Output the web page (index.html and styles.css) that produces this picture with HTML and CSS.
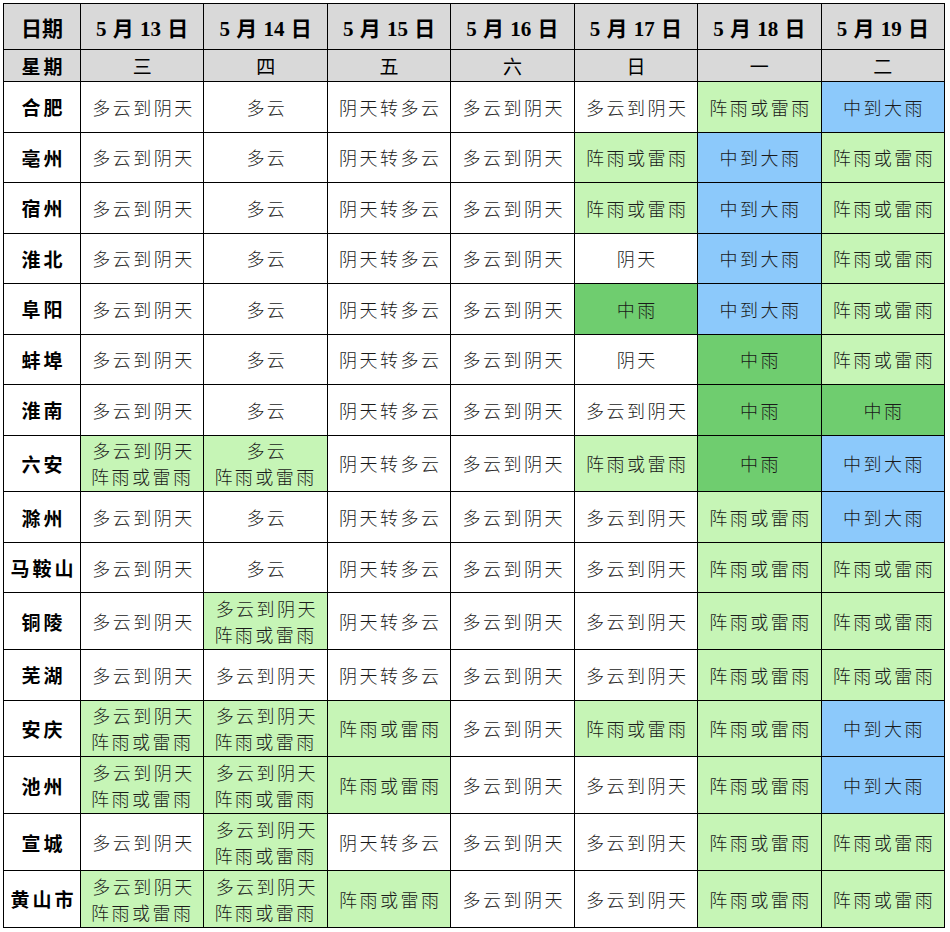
FILE: index.html
```html
<!DOCTYPE html>
<html lang="zh-CN">
<head>
<meta charset="utf-8">
<title>安徽天气预报</title>
<link rel="stylesheet" href="styles.css">
</head>
<body>
<table class="wx">
<colgroup><col class="c-city"><col><col><col><col><col><col><col></colgroup>
<thead>
<tr class="r-date"><th>日期</th><th>5 月 13 日</th><th>5 月 14 日</th><th>5 月 15 日</th><th>5 月 16 日</th><th>5 月 17 日</th><th>5 月 18 日</th><th>5 月 19 日</th></tr>
<tr class="r-week"><th>星期</th><th class="wd">三</th><th class="wd">四</th><th class="wd">五</th><th class="wd">六</th><th class="wd">日</th><th class="wd">一</th><th class="wd">二</th></tr>
</thead>
<tbody>
<tr class="s"><th>合肥</th><td>多云到阴天</td><td>多云</td><td>阴天转多云</td><td>多云到阴天</td><td>多云到阴天</td><td class="lg">阵雨或雷雨</td><td class="bl">中到大雨</td></tr>
<tr class="s"><th>亳州</th><td>多云到阴天</td><td>多云</td><td>阴天转多云</td><td>多云到阴天</td><td class="lg">阵雨或雷雨</td><td class="bl">中到大雨</td><td class="lg">阵雨或雷雨</td></tr>
<tr class="s"><th>宿州</th><td>多云到阴天</td><td>多云</td><td>阴天转多云</td><td>多云到阴天</td><td class="lg">阵雨或雷雨</td><td class="bl">中到大雨</td><td class="lg">阵雨或雷雨</td></tr>
<tr class="s"><th>淮北</th><td>多云到阴天</td><td>多云</td><td>阴天转多云</td><td>多云到阴天</td><td>阴天</td><td class="bl">中到大雨</td><td class="lg">阵雨或雷雨</td></tr>
<tr class="s"><th>阜阳</th><td>多云到阴天</td><td>多云</td><td>阴天转多云</td><td>多云到阴天</td><td class="mg">中雨</td><td class="bl">中到大雨</td><td class="lg">阵雨或雷雨</td></tr>
<tr class="s"><th>蚌埠</th><td>多云到阴天</td><td>多云</td><td>阴天转多云</td><td>多云到阴天</td><td>阴天</td><td class="mg">中雨</td><td class="lg">阵雨或雷雨</td></tr>
<tr class="s"><th>淮南</th><td>多云到阴天</td><td>多云</td><td>阴天转多云</td><td>多云到阴天</td><td>多云到阴天</td><td class="mg">中雨</td><td class="mg">中雨</td></tr>
<tr class="d"><th>六安</th><td class="lg">多云到阴天<br>阵雨或雷雨</td><td class="lg">多云<br>阵雨或雷雨</td><td>阴天转多云</td><td>多云到阴天</td><td class="lg">阵雨或雷雨</td><td class="mg">中雨</td><td class="bl">中到大雨</td></tr>
<tr class="s"><th>滁州</th><td>多云到阴天</td><td>多云</td><td>阴天转多云</td><td>多云到阴天</td><td>多云到阴天</td><td class="lg">阵雨或雷雨</td><td class="bl">中到大雨</td></tr>
<tr class="s"><th>马鞍山</th><td>多云到阴天</td><td>多云</td><td>阴天转多云</td><td>多云到阴天</td><td>多云到阴天</td><td class="lg">阵雨或雷雨</td><td class="lg">阵雨或雷雨</td></tr>
<tr class="d"><th>铜陵</th><td>多云到阴天</td><td class="lg">多云到阴天<br>阵雨或雷雨</td><td>阴天转多云</td><td>多云到阴天</td><td>多云到阴天</td><td class="lg">阵雨或雷雨</td><td class="lg">阵雨或雷雨</td></tr>
<tr class="s"><th>芜湖</th><td>多云到阴天</td><td>多云到阴天</td><td>阴天转多云</td><td>多云到阴天</td><td>多云到阴天</td><td class="lg">阵雨或雷雨</td><td class="lg">阵雨或雷雨</td></tr>
<tr class="d"><th>安庆</th><td class="lg">多云到阴天<br>阵雨或雷雨</td><td class="lg">多云到阴天<br>阵雨或雷雨</td><td class="lg">阵雨或雷雨</td><td>多云到阴天</td><td class="lg">阵雨或雷雨</td><td class="lg">阵雨或雷雨</td><td class="bl">中到大雨</td></tr>
<tr class="d"><th>池州</th><td class="lg">多云到阴天<br>阵雨或雷雨</td><td class="lg">多云到阴天<br>阵雨或雷雨</td><td class="lg">阵雨或雷雨</td><td>多云到阴天</td><td>多云到阴天</td><td class="lg">阵雨或雷雨</td><td class="bl">中到大雨</td></tr>
<tr class="d"><th>宣城</th><td>多云到阴天</td><td class="lg">多云到阴天<br>阵雨或雷雨</td><td>阴天转多云</td><td>多云到阴天</td><td>多云到阴天</td><td class="lg">阵雨或雷雨</td><td class="lg">阵雨或雷雨</td></tr>
<tr class="d"><th>黄山市</th><td class="lg">多云到阴天<br>阵雨或雷雨</td><td class="lg">多云到阴天<br>阵雨或雷雨</td><td class="lg">阵雨或雷雨</td><td>多云到阴天</td><td>多云到阴天</td><td class="lg">阵雨或雷雨</td><td class="lg">阵雨或雷雨</td></tr>
</tbody>
</table>
</body>
</html>
```
FILE: styles.css
```css
html, body {
  margin: 0;
  padding: 0;
  background: #ffffff;
}
body {
  padding: 3px 0 0 3px;
}
.wx {
  border-collapse: collapse;
  table-layout: fixed;
  width: 942px;
  font-family: "Noto Sans CJK SC", sans-serif;
  color: #1a1a1a;
}
.c-city {
  width: 77px;
}
.wx th,
.wx td {
  border: 1px solid #000;
  padding: 0;
  text-align: center;
  vertical-align: middle;
  white-space: nowrap;
  overflow: hidden;
}
.wx td {
  font-size: 18px;
  font-weight: 300;
  letter-spacing: 2.5px;
  line-height: 26px;
  text-indent: 2.5px;
}
.wx th {
  font-family: "Liberation Serif", "Noto Sans CJK SC", serif;
  font-weight: 700;
  font-size: 19px;
  letter-spacing: 3px;
  text-indent: 3px;
  color: #000;
}
.wx thead th {
  background: #d9d9d9;
}
.r-date {
  height: 46px;
}
.r-date th {
  font-size: 21px;
  letter-spacing: 0;
  text-indent: 0;
  word-spacing: 1px;
}
.r-week {
  height: 32px;
}
.wx th.wd {
  font-family: "Noto Sans CJK SC", sans-serif;
  font-weight: 400;
  font-size: 19px;
}
.r-week th:first-child {
  font-family: "Noto Sans CJK SC", sans-serif;
}
.s {
  height: 50.5px;
}
.d {
  height: 56.8px;
}
.wx tbody th {
  font-family: "Noto Sans CJK SC", sans-serif;
  font-weight: 700;
  background: #ffffff;
}
.lg {
  background: #c6f5b6;
}
.mg {
  background: #6fcd6f;
}
.bl {
  background: #8cc9fb;
}
```
